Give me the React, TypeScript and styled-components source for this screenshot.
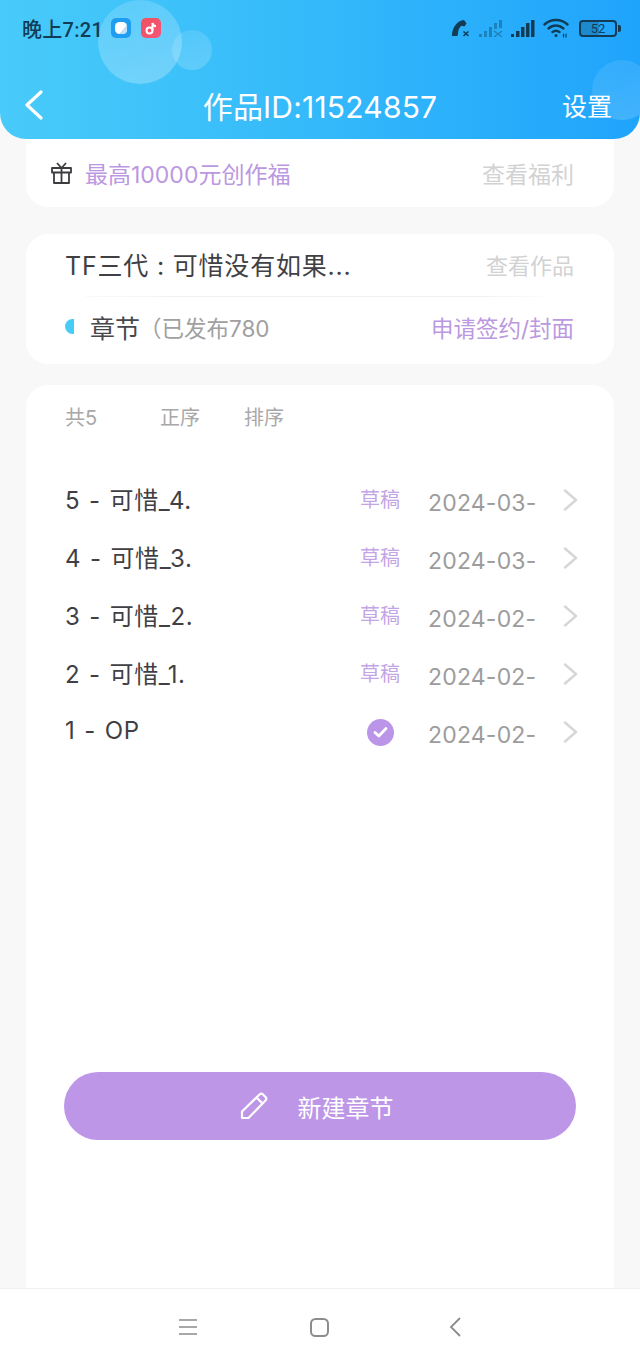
import React from 'react';
import styled, { createGlobalStyle } from 'styled-components';

const GlobalStyle = createGlobalStyle`
  html, body { margin: 0; padding: 0; background: #f8f8f8; }
  * { box-sizing: border-box; }
  body { font-family: "Inter", "Noto Sans CJK SC", sans-serif; }
`;

const Page = styled.div`
  width: 640px;
  height: 1365px;
  display: flex;
  flex-direction: column;
  overflow: hidden;
  background: #f8f8f8;
`;

const Header = styled.header`
  position: relative;
  z-index: 1;
  height: 139px;
  flex: none;
  overflow: hidden;
  border-radius: 0 0 26px 26px;
  background: linear-gradient(90deg, #48cbf9 0%, #38bdfa 40%, #1fa4fc 100%);
`;

const Bubble = styled.span<{ $x: number; $y: number; $size: number; $alpha: number }>`
  position: absolute;
  left: ${p => p.$x}px;
  top: ${p => p.$y}px;
  width: ${p => p.$size}px;
  height: ${p => p.$size}px;
  border-radius: 50%;
  background: linear-gradient(160deg, rgba(255, 255, 255, ${p => p.$alpha * 0.5}), rgba(255, 255, 255, ${p => p.$alpha}));
`;

const StatusBar = styled.div`
  position: relative;
  height: 56px;
  padding: 0 20px 0 22px;
  display: flex;
  align-items: center;
  color: #123c56;
`;

const Clock = styled.span`
  font-family: "Roboto", "Noto Sans CJK SC", sans-serif;
  font-size: 20px;
  font-weight: 500;
  letter-spacing: 0.3px;
  margin-right: 8px;
`;

const AppIcon = styled.span<{ $bg: string }>`
  width: 20px;
  height: 20px;
  margin-right: 10px;
  border-radius: 5px;
  background: ${p => p.$bg};
  display: flex;
  align-items: center;
  justify-content: center;
`;

const StatusIcons = styled.div`
  margin-left: auto;
  display: flex;
  align-items: center;
  gap: 8px;
`;

const Battery = styled.span`
  position: relative;
  width: 38px;
  height: 17px;
  border: 2px solid #123c56;
  border-radius: 4px;
  margin-right: 3px;
  margin-left: 2px;
  font-family: "Roboto", sans-serif;
  font-size: 13px;
  line-height: 13px;
  text-align: center;
  background: linear-gradient(90deg, rgba(18, 60, 86, 0.28) 52%, transparent 52%);

  &::after {
    content: "";
    position: absolute;
    right: -6px;
    top: 3px;
    width: 3px;
    height: 7px;
    border-radius: 0 2px 2px 0;
    background: #123c56;
  }
`;

const TitleBar = styled.div`
  position: relative;
  height: 83px;
  padding: 15px 28px 0 24px;
  display: grid;
  grid-template-columns: 1fr auto 1fr;
  align-items: center;
  color: #fff;
`;

const Title = styled.h1`
  margin: 0 0 0 4px;
  font-size: 30px;
  font-weight: 400;
  letter-spacing: 0.2px;
  white-space: nowrap;
`;

const SettingLink = styled.span`
  justify-self: end;
  font-size: 25px;
`;

const Content = styled.main`
  flex: 1;
  min-height: 0;
  padding: 0 26px;
  display: flex;
  flex-direction: column;
`;

const Card = styled.section`
  background: #fff;
  border-radius: 22px;
`;

const BenefitCard = styled(Card)`
  height: 68px;
  padding: 0 40px 1px 25px;
  border-radius: 0 0 22px 22px;
  display: flex;
  align-items: center;
  margin-bottom: 27px;
`;

const BenefitText = styled.span`
  margin-left: 13px;
  font-size: 23px;
  color: #bb98e0;
`;

const MutedLink = styled.span<{ $size: number }>`
  margin-left: auto;
  font-size: ${p => p.$size}px;
  color: #d2d2d2;
`;

const WorkCard = styled(Card)`
  height: 130px;
  margin-bottom: 21px;
  padding: 0 40px 0 39px;
  display: flex;
  flex-direction: column;
`;

const WorkRow = styled.div`
  height: 62px;
  padding-bottom: 2px;
  display: flex;
  align-items: center;
`;

const WorkName = styled.span`
  font-size: 25px;
  letter-spacing: 0.8px;
  color: #3f3f44;
`;

const Divider = styled.div`
  height: 1px;
  margin: 0 0 0 20px;
  width: 470px;
  background: linear-gradient(90deg, #fafafa, #f1f1f1 20%, #f1f1f1 85%, #fff);
`;

const ChapterRow = styled.div`
  flex: 1;
  padding-bottom: 8px;
  display: flex;
  align-items: center;
`;

const HalfDot = styled.span`
  width: 9px;
  height: 15px;
  margin-right: 16px;
  border-radius: 8px 0 0 8px;
  background: #46cdf6;
`;

const ChapterLabel = styled.span`
  font-size: 25px;
  color: #47474c;
`;

const ChapterCount = styled.span`
  margin-left: -1px;
  font-size: 22.5px;
  color: #a0a0a0;
`;

const ApplyLink = styled.span`
  margin-left: auto;
  font-size: 22.5px;
  color: #bb98e0;
`;

const ChapterCard = styled(Card)`
  flex: 1;
  min-height: 0;
  padding: 19px 36px 148px 39px;
  border-radius: 22px 22px 0 0;
  display: flex;
  flex-direction: column;
`;

const Toolbar = styled.div`
  height: 24px;
  margin-bottom: 43px;
  display: flex;
  align-items: center;
  font-size: 20px;
  color: #a8a8a8;
`;

const ToolbarItem = styled.span<{ $width: number }>`
  width: ${p => p.$width}px;
`;

const ChapterList = styled.ul`
  margin: 0;
  padding: 0;
  list-style: none;
`;

const ChapterItem = styled.li`
  height: 58px;
  display: grid;
  grid-template-columns: 295px 40px 1fr 15px;
  align-items: center;
`;

const ChapterTitle = styled.span`
  padding-bottom: 4px;
  font-size: 24px;
  letter-spacing: 0.6px;
  word-spacing: 1.5px;
  color: #3f3f44;
`;

const Draft = styled.span`
  padding-bottom: 3px;
  font-size: 20px;
  color: #c3a5e6;
  white-space: nowrap;
`;

const PublishedMark = styled.span`
  justify-self: center;
  width: 27px;
  height: 27px;
  border-radius: 50%;
  background: #bb96e8;
  display: flex;
  align-items: center;
  justify-content: center;
`;

const ChapterDate = styled.span`
  margin-left: 28px;
  padding-top: 6px;
  font-size: 23px;
  letter-spacing: 0.2px;
  color: #9c9c9c;
  white-space: nowrap;
`;

const NewChapterButton = styled.button`
  flex: none;
  margin-top: auto;
  margin-right: 2px;
  margin-left: -1px;
  height: 68px;
  border: none;
  border-radius: 34px;
  background: #bd96e8;
  color: #fff;
  font: inherit;
  font-size: 24px;
  display: flex;
  align-items: center;
  justify-content: center;
  gap: 30px;
  padding: 0 7px 0 0;
`;

const NavBar = styled.nav`
  flex: none;
  height: 77px;
  background: #fff;
  border-top: 1px solid #efefef;
  padding-left: 179px;
  display: grid;
  grid-template-columns: 131px 139px 12px;
  align-items: center;
`;

const chapters = [
  { title: '5 - 可惜_4.', date: '2024-03-', draft: true },
  { title: '4 - 可惜_3.', date: '2024-03-', draft: true },
  { title: '3 - 可惜_2.', date: '2024-02-', draft: true },
  { title: '2 - 可惜_1.', date: '2024-02-', draft: true },
  { title: '1 - OP', date: '2024-02-', draft: false },
];

const Chevron = () => (
  <svg width="15" height="22" viewBox="0 0 15 22" fill="none" stroke="#d6d6d6" strokeWidth="2.4" strokeLinecap="round" strokeLinejoin="round">
    <path d="M2 1.5 13 11 2 20.5" />
  </svg>
);

export default function App() {
  return (
    <Page>
      <GlobalStyle />
      <Header>
        <Bubble $x={98} $y={0} $size={84} $alpha={0.28} />
        <Bubble $x={172} $y={30} $size={40} $alpha={0.2} />
        <Bubble $x={592} $y={60} $size={60} $alpha={0.16} />
        <StatusBar>
          <Clock>晚上7:21</Clock>
          <AppIcon $bg="#1f9df0">
            <svg width="14" height="14" viewBox="0 0 14 14">
              <rect x="1" y="1" width="12" height="12" rx="4.5" fill="#fff" />
              <path d="M13 4v5a4 4 0 0 1-4 4H5z" fill="#bfe0f8" />
            </svg>
          </AppIcon>
          <AppIcon $bg="linear-gradient(135deg, #f0505e, #f4577a)">
            <svg width="14" height="15" viewBox="0 0 14 15" fill="none" stroke="#fff" strokeWidth="2">
              <circle cx="5.5" cy="9.5" r="3" />
              <path d="M8.5 9.5V2c.3 1.8 1.6 3 3.5 3.2" />
            </svg>
          </AppIcon>
          <StatusIcons>
            <svg width="20" height="18" viewBox="0 0 20 18" fill="#123c56">
              <path d="M1 17C.8 9 6 1.5 13 1l2.6 3.6-2.2 3-3-.8C8 9 7 11.5 7 14.6L6.4 17z" />
              <path d="M12.5 12.5l5 4.5M17.5 12.5l-5 4.5" stroke="#123c56" strokeWidth="1.5" />
            </svg>
            <svg width="24" height="18" viewBox="0 0 24 18" fill="#123c56" opacity="0.38">
              <rect x="0" y="15" width="3" height="3" />
              <rect x="5" y="12" width="3" height="6" />
              <rect x="10" y="8" width="3" height="10" />
              <rect x="15" y="4" width="3" height="6" />
              <rect x="20" y="1" width="3" height="8" />
              <path d="M15 12l8 6M23 12l-8 6" stroke="#123c56" strokeWidth="1.5" />
            </svg>
            <svg width="24" height="18" viewBox="0 0 24 18" fill="#123c56">
              <rect x="0" y="15" width="3" height="3" />
              <rect x="5" y="12" width="3.5" height="6" />
              <rect x="10" y="8" width="3.5" height="10" />
              <rect x="15" y="4" width="3.5" height="14" />
              <rect x="20" y="1" width="3.5" height="17" />
            </svg>
            <svg width="26" height="20" viewBox="0 0 26 20" fill="none" stroke="#123c56" strokeWidth="2.4" strokeLinecap="round">
              <path d="M1.5 6.5C8 .5 18 .5 24.5 6.5" />
              <path d="M5.5 10.5c4.5-4 10.5-4 15 0" />
              <path d="M9.5 14c2-1.5 5-1.5 7 0" />
              <circle cx="13" cy="17.5" r="1.5" fill="#123c56" stroke="none" />
              <path d="M20.5 16v3M23 16v3" strokeWidth="1.2" />
            </svg>
            <Battery>52</Battery>
          </StatusIcons>
        </StatusBar>
        <TitleBar>
          <svg width="20" height="30" viewBox="0 0 20 30" fill="none" stroke="#fff" strokeWidth="3.2" strokeLinecap="round" strokeLinejoin="round">
            <path d="M17 2 3 15l14 13" />
          </svg>
          <Title>作品ID:11524857</Title>
          <SettingLink>设置</SettingLink>
        </TitleBar>
      </Header>
      <Content>
        <BenefitCard>
          <svg width="21" height="22" viewBox="0 0 21 22" fill="none" stroke="#3c3c40" strokeWidth="1.8" strokeLinejoin="round">
            <rect x="1" y="6" width="19" height="4.5" />
            <path d="M3 10.5V21h15V10.5M10.5 6v15M6 1l4.5 5L15 1" />
          </svg>
          <BenefitText>最高10000元创作福</BenefitText>
          <MutedLink $size={23}>查看福利</MutedLink>
        </BenefitCard>
        <WorkCard>
          <WorkRow>
            <WorkName>TF三代 : 可惜没有如果...</WorkName>
            <MutedLink $size={22}>查看作品</MutedLink>
          </WorkRow>
          <Divider />
          <ChapterRow>
            <HalfDot />
            <ChapterLabel>章节</ChapterLabel>
            <ChapterCount>（已发布780</ChapterCount>
            <ApplyLink>申请签约/封面</ApplyLink>
          </ChapterRow>
        </WorkCard>
        <ChapterCard>
          <Toolbar>
            <ToolbarItem $width={95}>共5</ToolbarItem>
            <ToolbarItem $width={84}>正序</ToolbarItem>
            <ToolbarItem $width={60}>排序</ToolbarItem>
          </Toolbar>
          <ChapterList>
            {chapters.map(ch => (
              <ChapterItem key={ch.title}>
                <ChapterTitle>{ch.title}</ChapterTitle>
                {ch.draft ? (
                  <Draft>草稿</Draft>
                ) : (
                  <PublishedMark>
                    <svg width="15" height="12" viewBox="0 0 15 12" fill="none" stroke="#fff" strokeWidth="2.8" strokeLinecap="round" strokeLinejoin="round">
                      <path d="M2 6.5 5.8 10 13 2.5" />
                    </svg>
                  </PublishedMark>
                )}
                <ChapterDate>{ch.date}</ChapterDate>
                <Chevron />
              </ChapterItem>
            ))}
          </ChapterList>
          <NewChapterButton>
            <svg width="28" height="28" viewBox="0 0 28 28" fill="none" stroke="#fff" strokeWidth="2.2" strokeLinejoin="round">
              <path d="M2 26V19.5L19.5 2.5a2.5 2.5 0 0 1 3.5 0l2.5 2.500a2.5 2.5 0 0 1 0 3.5L8.5 26zM16.5 5.5l6 6" />
            </svg>
            新建章节
          </NewChapterButton>
        </ChapterCard>
      </Content>
      <NavBar>
        <svg width="18" height="18" viewBox="0 0 18 18" stroke="#8c8c8c" strokeWidth="1.6">
          <path d="M0 2h18M0 9h18M0 16h18" />
        </svg>
        <svg width="19" height="19" viewBox="0 0 19 19" fill="none" stroke="#8c8c8c" strokeWidth="2">
          <rect x="1" y="1" width="17" height="17" rx="4.5" />
        </svg>
        <svg width="12" height="20" viewBox="0 0 12 20" fill="none" stroke="#8c8c8c" strokeWidth="1.8">
          <path d="M11 1 2 10l9 9" />
        </svg>
      </NavBar>
    </Page>
  );
}
